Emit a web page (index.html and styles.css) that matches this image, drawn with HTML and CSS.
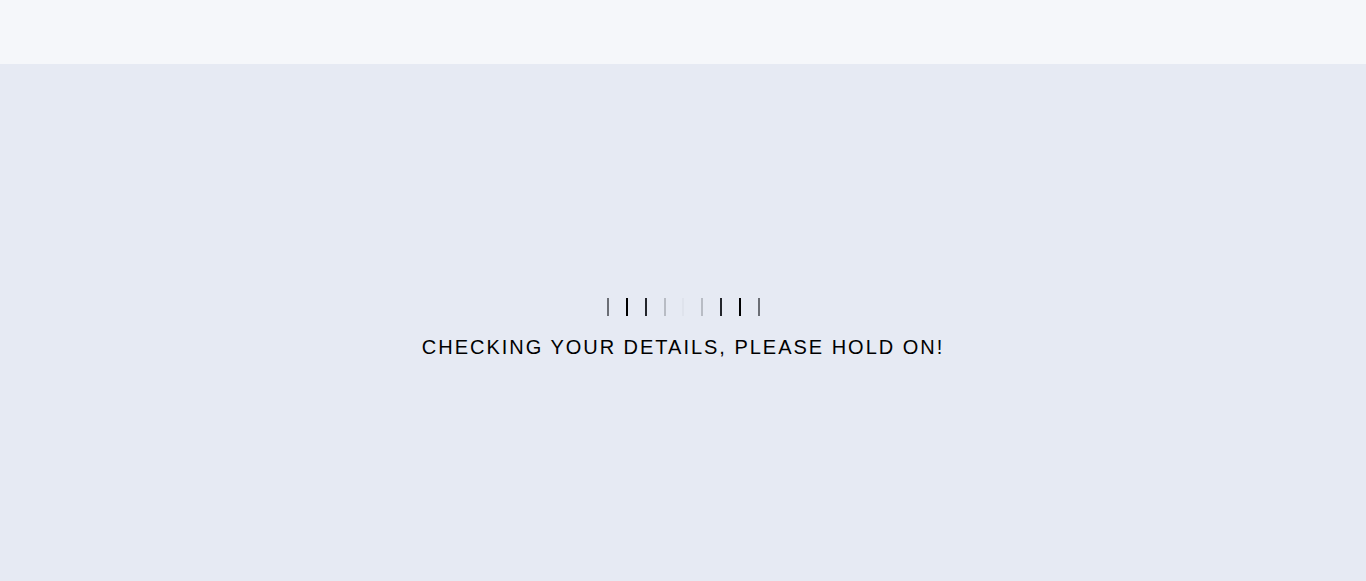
FILE: index.html
```html
<!DOCTYPE html>
<html>
<head>
<meta charset="utf-8">
<link rel="stylesheet" href="styles.css">
</head>
<body>
<header class="topbar"></header>
<main class="stage">
  <div class="loader">
    <div class="bars">
      <span class="bar b1"></span>
      <span class="bar b2"></span>
      <span class="bar b3"></span>
      <span class="bar b4"></span>
      <span class="bar b5"></span>
      <span class="bar b6"></span>
      <span class="bar b7"></span>
      <span class="bar b8"></span>
      <span class="bar b9"></span>
    </div>
    <p class="message">CHECKING YOUR DETAILS, PLEASE HOLD ON!</p>
  </div>
</main>
</body>
</html>
```

FILE: styles.css
```css
html, body {
  margin: 0;
  padding: 0;
  height: 100%;
}
body {
  font-family: "Liberation Sans", Arial, sans-serif;
  background: #e6eaf3;
  display: flex;
  flex-direction: column;
}
.topbar {
  height: 64px;
  background: #f5f7fa;
  flex: none;
}
.stage {
  flex: 1;
  display: flex;
  justify-content: center;
  padding-top: 234px;
}
.loader {
  display: flex;
  flex-direction: column;
  align-items: center;
}
.bars {
  display: flex;
  gap: 16.8px;
  height: 18px;
  margin-left: 1px;
}
.bar {
  width: 2px;
  height: 18px;
  background: #000;
}
.b1 { background: #6b6e75; }
.b2 { background: #000; }
.b3 { background: #23252b; }
.b4 { background: #b8bcc4; }
.b5 { background: #dfe3ec; }
.b6 { background: #b8bcc4; }
.b7 { background: #23252b; }
.b8 { background: #000; }
.b9 { background: #6b6e75; }
.message {
  margin: 19px 0 0;
  font-size: 20px;
  letter-spacing: 1.98px;
  color: #000;
  line-height: 24px;
}
```
